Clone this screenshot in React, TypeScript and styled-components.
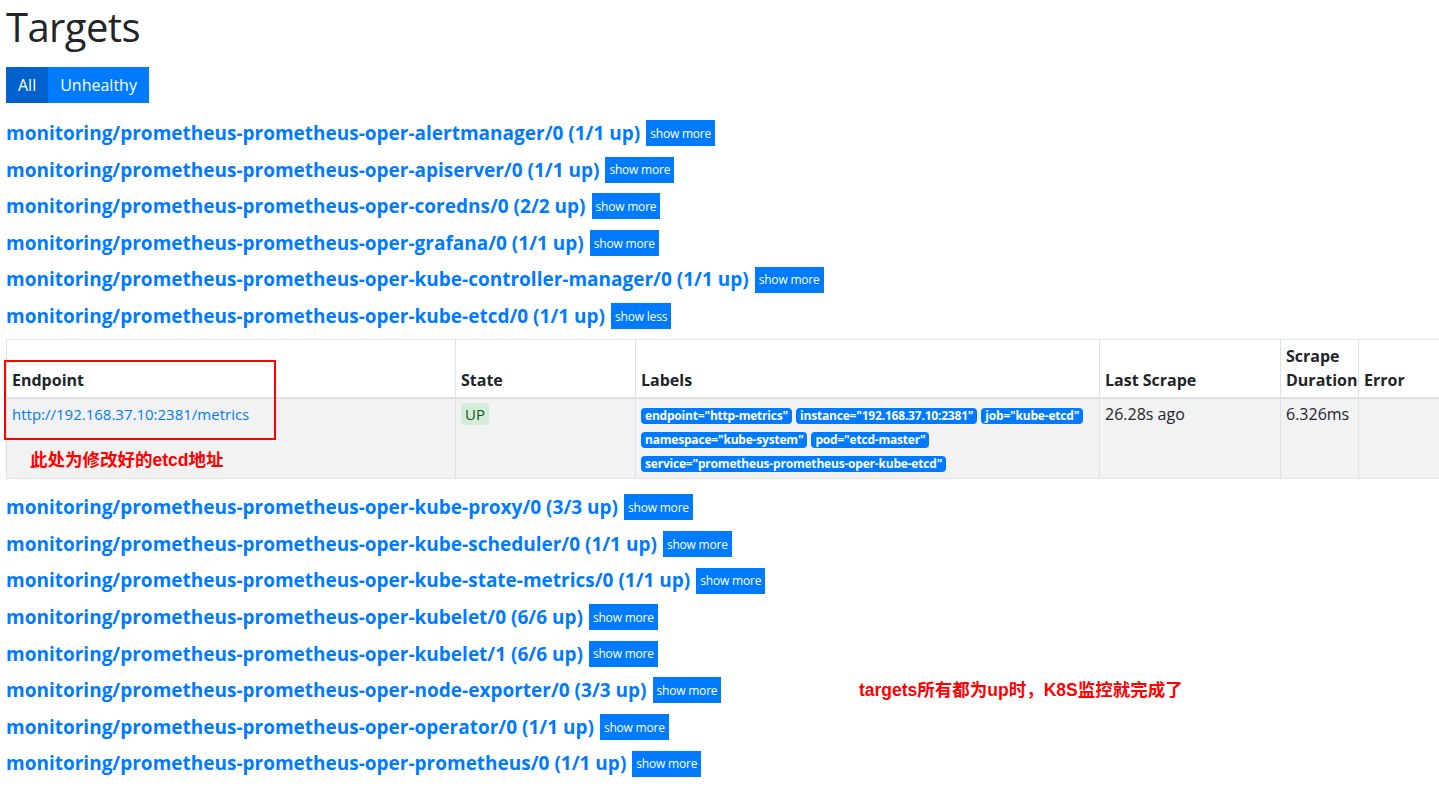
import * as React from 'react'
import styled, { createGlobalStyle } from 'styled-components'

const GlobalStyle = createGlobalStyle`
  html, body {
    margin: 0;
    padding: 0;
    background: #fff;
    overflow-x: hidden;
  }
  body {
    font-family: "Open Sans", "Noto Sans", sans-serif;
    color: #212529;
    font-size: 16px;
    line-height: 1.5;
  }
`

interface Job {
  name: string
  up: string
  expanded?: boolean
}

const jobsBefore: Job[] = [
  { name: 'monitoring/prometheus-prometheus-oper-alertmanager/0', up: '1/1 up' },
  { name: 'monitoring/prometheus-prometheus-oper-apiserver/0', up: '1/1 up' },
  { name: 'monitoring/prometheus-prometheus-oper-coredns/0', up: '2/2 up' },
  { name: 'monitoring/prometheus-prometheus-oper-grafana/0', up: '1/1 up' },
  { name: 'monitoring/prometheus-prometheus-oper-kube-controller-manager/0', up: '1/1 up' },
  { name: 'monitoring/prometheus-prometheus-oper-kube-etcd/0', up: '1/1 up', expanded: true },
]

const jobsAfter: Job[] = [
  { name: 'monitoring/prometheus-prometheus-oper-kube-proxy/0', up: '3/3 up' },
  { name: 'monitoring/prometheus-prometheus-oper-kube-scheduler/0', up: '1/1 up' },
  { name: 'monitoring/prometheus-prometheus-oper-kube-state-metrics/0', up: '1/1 up' },
  { name: 'monitoring/prometheus-prometheus-oper-kubelet/0', up: '6/6 up' },
  { name: 'monitoring/prometheus-prometheus-oper-kubelet/1', up: '6/6 up' },
  { name: 'monitoring/prometheus-prometheus-oper-node-exporter/0', up: '3/3 up' },
  { name: 'monitoring/prometheus-prometheus-oper-operator/0', up: '1/1 up' },
  { name: 'monitoring/prometheus-prometheus-oper-prometheus/0', up: '1/1 up' },
]

const labels = [
  'endpoint="http-metrics"',
  'instance="192.168.37.10:2381"',
  'job="kube-etcd"',
  'namespace="kube-system"',
  'pod="etcd-master"',
  'service="prometheus-prometheus-oper-kube-etcd"',
]

const JobRow: React.FC<{ job: Job }> = ({ job }) => (
  <RowStyled>
    <JobLink href="#">{job.name} ({job.up})</JobLink>
    <ShowButton>{job.expanded ? 'show less' : 'show more'}</ShowButton>
  </RowStyled>
)

export default function App() {
  return (
    <PageStyled>
      <GlobalStyle />
      <Title>Targets</Title>
      <ButtonGroup>
        <FilterButton active>All</FilterButton>
        <FilterButton>Unhealthy</FilterButton>
      </ButtonGroup>

      <JobList top={12}>
        {jobsBefore.map(j => <JobRow key={j.name} job={j} />)}
      </JobList>

      <TableStyled>
        <colgroup>
          <col style={{ width: 449 }} />
          <col style={{ width: 180 }} />
          <col style={{ width: 464 }} />
          <col style={{ width: 181 }} />
          <col style={{ width: 78 }} />
          <col style={{ width: 110 }} />
        </colgroup>
        <thead>
          <tr>
            <th>Endpoint</th>
            <th>State</th>
            <th>Labels</th>
            <th>Last Scrape</th>
            <th>Scrape Duration</th>
            <th>Error</th>
          </tr>
        </thead>
        <tbody>
          <tr>
            <td><EndpointLink href="#">http://192.168.37.10:2381/metrics</EndpointLink></td>
            <td><StateBadge>UP</StateBadge></td>
            <td>
              <LabelWrap>
                {labels.map(l => <LabelBadge key={l}>{l}</LabelBadge>)}
              </LabelWrap>
            </td>
            <td>26.28s ago</td>
            <td>6.326ms</td>
            <td></td>
          </tr>
        </tbody>
      </TableStyled>

      <JobList top={0}>
        {jobsAfter.map(j => <JobRow key={j.name} job={j} />)}
      </JobList>

      <RedBox />
      <Note top={448} left={30}>此处为修改好的etcd地址</Note>
      <Note top={678} left={859}>targets所有都为up时，K8S监控就完成了</Note>
    </PageStyled>
  )
}

const PageStyled = styled.div`
  position: relative;
  padding: 0 0 20px 6px;
  width: 1433px;
`

const Title = styled.h1`
  margin: 0;
  padding-top: 3px;
  font-size: 40px;
  font-weight: 500;
  line-height: 48px;
  color: #212529;
  letter-spacing: -0.6px;
`

const ButtonGroup = styled.div`
  display: inline-flex;
  margin-top: 16px;
`

const FilterButton = styled.button<{ active?: boolean }>`
  border: none;
  border-radius: 0;
  height: 36px;
  padding: 0 12px;
  font-family: inherit;
  font-size: 16px;
  color: #fff;
  background-color: ${({ active }) => (active ? '#0062cc' : '#007bff')};
`

const JobList = styled.div<{ top: number }>`
  display: flex;
  flex-direction: column;
  margin-top: ${({ top }) => top}px;
`

const RowStyled = styled.div`
  display: flex;
  align-items: center;
  height: 36.6px;
`

const JobLink = styled.a`
  font-size: 19px;
  font-weight: 700;
  color: #007bff;
  text-decoration: none;
`

const ShowButton = styled.button`
  margin-left: 6px;
  height: 26px;
  padding: 0 4px;
  border: none;
  border-radius: 0;
  background: #007bff;
  color: #fff;
  font-family: inherit;
  font-size: 12px;
  letter-spacing: -0.2px;
`

const TableStyled = styled.table`
  table-layout: fixed;
  border-collapse: collapse;
  width: 1462px;
  margin: 4px 0 10px;

  th, td {
    border: 1px solid #dee2e6;
    padding: 4.8px 5px;
    text-align: left;
  }

  th {
    vertical-align: bottom;
    font-weight: 700;
    border-bottom: 2px solid #dee2e6;
  }

  td {
    vertical-align: top;
    padding: 3px 5px 4px;
    background: #f2f2f2;
  }
`

const EndpointLink = styled.a`
  color: #007bff;
  text-decoration: none;
  font-size: 15px;
`

const StateBadge = styled.span`
  display: inline-block;
  padding: 0 4px;
  line-height: 22px;
  border-radius: 4px;
  background: #d4edda;
  color: #155724;
  font-size: 15px;
`

const LabelWrap = styled.div`
  line-height: 24px;
`

const LabelBadge = styled.span`
  display: inline-block;
  vertical-align: middle;
  margin-right: 4px;
  padding: 2px 4px;
  line-height: 1;
  font-size: 12px;
  font-weight: 700;
  border-radius: 4px;
  background: #007bff;
  color: #fff;
  letter-spacing: -0.2px;
`

const RedBox = styled.div`
  position: absolute;
  left: 4px;
  top: 360px;
  width: 268px;
  height: 76px;
  border: 2px solid #ff0000;
  pointer-events: none;
`

const Note = styled.div<{ top: number; left: number }>`
  position: absolute;
  top: ${({ top }) => top}px;
  left: ${({ left }) => left}px;
  color: #ff0000;
  font-family: "Liberation Sans", "Noto Sans CJK SC", sans-serif;
  font-weight: 700;
  font-size: 17.5px;
  line-height: 24px;
`
